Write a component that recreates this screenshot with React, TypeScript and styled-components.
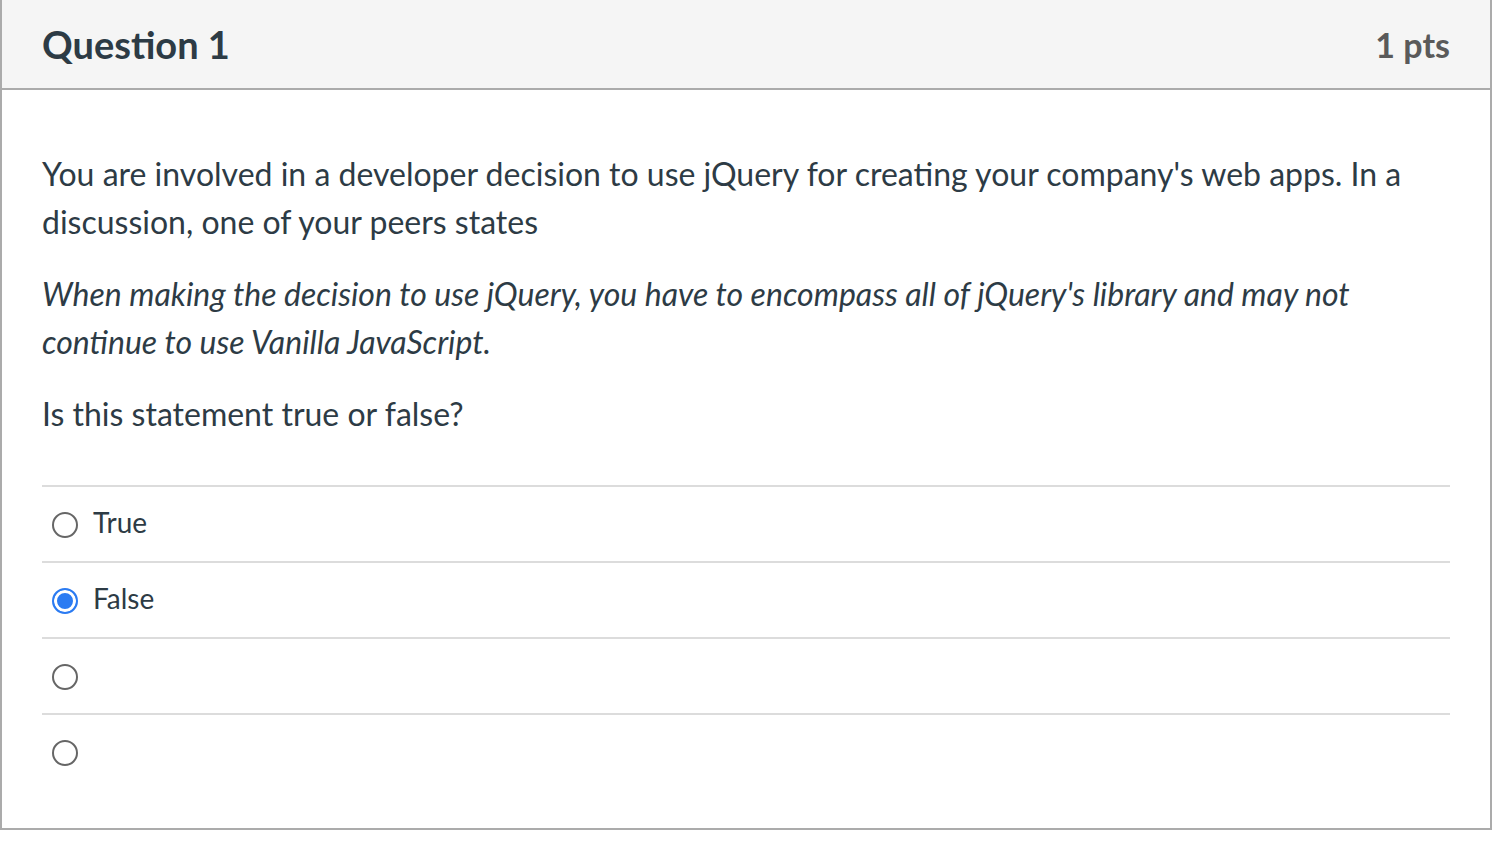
import * as React from 'react'
import styled, { createGlobalStyle } from 'styled-components'

const GlobalStyle = createGlobalStyle`
    html, body {
        margin: 0;
        padding: 0;
        background: #ffffff;
    }
    body {
        font-family: Lato, "Noto Sans", "Liberation Sans", sans-serif;
        color: #2d3b45;
    }
`

const answers = [
    { id: 'a1', label: 'True', checked: false },
    { id: 'a2', label: 'False', checked: true },
    { id: 'a3', label: '', checked: false },
    { id: 'a4', label: '', checked: false },
]

const App = () => (
    <>
        <GlobalStyle />
        <QuestionCard>
            <QuestionHeader>
                <QuestionName>Question 1</QuestionName>
                <QuestionPoints>1 pts</QuestionPoints>
            </QuestionHeader>
            <QuestionBody>
                <QuestionText>
                    <Paragraph>
                        You are involved in a developer decision to use jQuery for creating your company's web apps. In a
                        discussion, one of your peers states
                    </Paragraph>
                    <Paragraph italic>
                        When making the decision to use jQuery, you have to encompass all of jQuery's library and may not
                        continue to use Vanilla JavaScript.
                    </Paragraph>
                    <Paragraph>Is this statement true or false?</Paragraph>
                </QuestionText>
                <AnswerList>
                    {answers.map(a => (
                        <AnswerRow key={a.id}>
                            <Radio checked={a.checked} />
                            <AnswerLabel>{a.label}</AnswerLabel>
                        </AnswerRow>
                    ))}
                </AnswerList>
            </QuestionBody>
        </QuestionCard>
    </>
)

const QuestionCard = styled.div`
    width: 1492px;
    box-sizing: border-box;
    border: 2px solid #ababab;
    border-top: none;
    background: #ffffff;
`

const QuestionHeader = styled.div`
    height: 90px;
    box-sizing: border-box;
    background: #f5f5f5;
    border-bottom: 2px solid #ababab;
    display: flex;
    align-items: center;
    justify-content: space-between;
    padding: 0 40px;
`

const QuestionName = styled.h2`
    margin: 0;
    font-size: 38px;
    font-weight: 700;
    color: #2d3b45;
    line-height: 1;
`

const QuestionPoints = styled.div`
    font-size: 34px;
    font-weight: 700;
    color: #5a5a5a;
    line-height: 1;
    padding-top: 2px;
`

const QuestionBody = styled.div`
    padding: 60px 40px 39px 40px;
`

const QuestionText = styled.div`
    font-size: 32px;
    line-height: 48px;
    color: #2d3b45;
`

const Paragraph = styled.p<{ italic?: boolean }>`
    margin: 0 0 24px;
    font-style: ${p => (p.italic ? 'italic' : 'normal')};

    &:last-child {
        margin-bottom: 47px;
    }
`

const AnswerList = styled.div`
    display: flex;
    flex-direction: column;
`

const AnswerRow = styled.div`
    height: 76px;
    box-sizing: border-box;
    border-top: 2px solid #dcdcdc;
    display: flex;
    align-items: center;
    padding-left: 10px;
    gap: 15px;
`

const Radio = styled.span<{ checked: boolean }>`
    width: 26px;
    height: 26px;
    box-sizing: border-box;
    border-radius: 50%;
    border: 2px solid ${p => (p.checked ? '#2b7bf2' : '#666666')};
    background: ${p => (p.checked ? '#2b7bf2' : '#ffffff')};
    box-shadow: ${p => (p.checked ? 'inset 0 0 0 3px #ffffff' : 'none')};
    flex: 0 0 auto;
    margin-top: 2px;
`

const AnswerLabel = styled.span`
    font-size: 28px;
    color: #2d3b45;
    line-height: 1;
    margin-top: -4px;
`

export default App
